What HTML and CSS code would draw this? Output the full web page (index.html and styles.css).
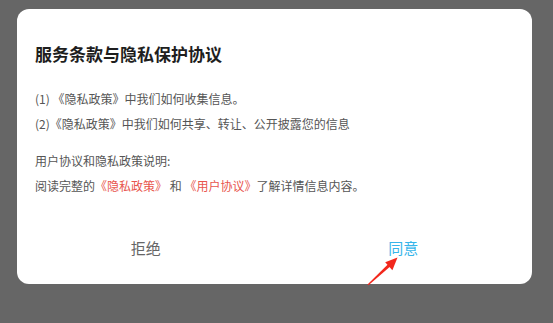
FILE: index.html
```html
<!DOCTYPE html>
<html lang="zh-CN">
<head>
<meta charset="utf-8">
<title>服务条款与隐私保护协议</title>
<link rel="stylesheet" href="styles.css">
</head>
<body>
<div class="dialog">
  <div class="content">
    <h1 class="title">服务条款与隐私保护协议</h1>
    <div class="para">
      <p class="line">(1) 《隐私政策》中我们如何收集信息。</p>
      <p class="line">(2)《隐私政策》中我们如何共享、转让、公开披露您的信息</p>
    </div>
    <div class="para second">
      <p class="line">用户协议和隐私政策说明:</p>
      <p class="line">阅读完整的<span class="link">《隐私政策》</span> 和 <span class="link">《用户协议》</span>了解详情信息内容。</p>
    </div>
  </div>
  <div class="footer">
    <div class="btn reject">拒绝</div>
    <div class="btn agree">同意</div>
  </div>
</div>
<svg class="arrow" width="553" height="323" viewBox="0 0 553 323">
  <polygon points="367.5,284.5 388,264.2 390.2,266.6 368.5,285.3" fill="#f2271c"/>
  <polygon points="397.5,257.5 385.2,262.3 392.4,270.2" fill="#f2271c"/>
</svg>
</body>
</html>
```
FILE: styles.css
```css
html, body {
  margin: 0;
  padding: 0;
}
body {
  width: 553px;
  height: 323px;
  background: #666666;
  font-family: "Noto Sans CJK SC", "Noto Sans", sans-serif;
  position: relative;
  overflow: hidden;
  padding-top: 9px;
  box-sizing: border-box;
}
.dialog {
  margin-left: 17px;
  width: 515px;
  height: 275px;
  background: #ffffff;
  border-radius: 12px;
  box-sizing: border-box;
  padding-top: 33px;
}
.content {
  padding: 0 18px;
}
.title {
  margin: 0;
  font-size: 17px;
  line-height: 24px;
  font-weight: bold;
  color: #1e1e1e;
}
.para {
  margin-top: 20px;
}
.para.second {
  margin-top: 12px;
}
.line {
  margin: 0;
  font-size: 12px;
  line-height: 25px;
  color: #555555;
  white-space: nowrap;
}
.link {
  color: #e8554d;
}
.footer {
  display: flex;
  margin-top: 25px;
  height: 48px;
}
.btn {
  flex: 1;
  display: flex;
  align-items: center;
  justify-content: center;
  font-size: 15px;
}
.reject {
  color: #666666;
}
.agree {
  color: #36b5ea;
}
.arrow {
  position: absolute;
  left: 0;
  top: 0;
  pointer-events: none;
}
```
